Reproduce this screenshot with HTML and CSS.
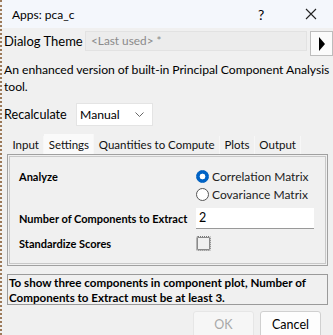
FILE: index.html
```html
<!DOCTYPE html>
<html>
<head>
<meta charset="utf-8">
<link rel="stylesheet" href="styles.css">
</head>
<body>
<div class="win">
  <div class="titlebar">
    <span class="title">Apps: pca_c</span>
    <span class="help">?</span>
    <svg class="close" width="12" height="12" viewBox="0 0 12 12"><path d="M1 1L11 11M11 1L1 11" stroke="#222" stroke-width="1.1" fill="none"/></svg>
  </div>
  <div class="theme-row">
    <span class="theme-label">Dialog Theme</span>
    <div class="theme-box">&lt;Last used&gt; *</div>
    <div class="theme-btn"><svg width="8" height="14" viewBox="0 0 8 14"><path d="M1 0L7 7L1 14Z" fill="#000"/></svg></div>
  </div>
  <div class="desc">An enhanced version of built-in Principal Component Analysis tool.</div>
  <div class="recalc-row">
    <span class="recalc-label">Recalculate</span>
    <div class="select"><span>Manual</span><svg width="9" height="6" viewBox="0 0 9 6"><path d="M0.5 0.5L4.5 4.5L8.5 0.5" stroke="#666" fill="none"/></svg></div>
  </div>
  <div class="tabs">
    <div class="tab">Input</div>
    <div class="tab active">Settings</div>
    <div class="tab">Quantities to Compute</div>
    <div class="tab">Plots</div>
    <div class="tab">Output</div>
  </div>
  <div class="panel">
    <div class="panel-inner">
      <div class="row analyze">
        <span class="lbl">Analyze</span>
        <div class="radios">
          <div class="radio-item"><span class="radio on"></span>Correlation Matrix</div>
          <div class="radio-item"><span class="radio"></span>Covariance Matrix</div>
        </div>
      </div>
      <div class="row ncomp">
        <span class="lbl">Number of Components to Extract</span>
        <div class="numbox">2</div>
      </div>
      <div class="row stdz">
        <span class="lbl">Standardize Scores</span>
        <span class="check"></span>
      </div>
    </div>
  </div>
  <div class="msg">To show three components in component plot, Number of Components to Extract must be at least 3.</div>
  <div class="buttons">
    <div class="btn disabled">OK</div>
    <div class="btn">Cancel</div>
  </div>
</div>
</body>
</html>
```
FILE: styles.css
```css
html, body {
  margin: 0;
  padding: 0;
}
body {
  width: 333px;
  height: 335px;
  overflow: hidden;
  background: #f0f0f0;
  font-family: Lato, "Liberation Sans", sans-serif;
  font-size: 12.5px;
  color: #000;
}
.win {
  height: 335px;
  border-left: 2px dotted #9c7a5a;
  box-sizing: border-box;
}
.titlebar {
  height: 28px;
  background: #f4f7fc;
  display: flex;
  align-items: center;
  padding-left: 10px;
  font-size: 12px;
}
.title {
  flex: 1;
}
.help {
  width: 12px;
  margin-right: 35px;
  font-size: 14px;
}
.close {
  margin-right: 16px;
}
.theme-row {
  display: flex;
  align-items: flex-start;
  margin-top: 3px;
  padding-left: 2px;
  height: 24px;
  white-space: nowrap;
}
.theme-label {
  font-size: 13px;
  color: #000;
  margin-top: 2px;
  width: 80px;
}
.theme-box {
  width: 215px;
  height: 18px;
  border: 1px solid #e2e2e2;
  background: #ececec;
  color: #8a8a8a;
  font-size: 11.8px;
  line-height: 18px;
  padding-left: 5px;
  box-sizing: content-box;
  margin-left: 1px;
}
.theme-btn {
  width: 21px;
  height: 23px;
  margin-left: 3px;
  border: 1px solid #bdbdbd;
  background: #fbfbfb;
  display: flex;
  align-items: center;
  justify-content: center;
}
.desc {
  padding: 6px 0 0 2px;
  font-size: 12.2px;
  line-height: 17px;
  letter-spacing: -0.05px;
}
.recalc-row {
  display: flex;
  align-items: center;
  padding-left: 2px;
  margin-top: 8px;
}
.recalc-label {
  font-size: 12.6px;
  width: 72px;
}
.select {
  width: 64px;
  height: 21px;
  background: #fff;
  border: 1px solid #e4e4e4;
  display: flex;
  align-items: center;
  justify-content: space-between;
  padding: 0 8px 0 3px;
  font-size: 12.2px;
}
.tabs {
  display: flex;
  margin-top: 8px;
  padding-left: 6px;
  height: 20px;
  align-items: flex-end;
  white-space: nowrap;
}
.tab {
  padding: 0 4.4px;
  height: 18px;
  line-height: 18px;
  font-size: 11.5px;
  background: #f0f0f0;
  border-right: 1px solid #f7f7f7;
  color: #111;
}
.tab.active {
  background: #fafafa;
  height: 20px;
  line-height: 22px;
}
.panel {
  margin: 0 5px 0 5px;
  border: 1px solid #a0a0a0;
  padding: 1px;
  background: #f0f0f0;
  height: 112px;
  box-sizing: border-box;
}
.panel-inner {
  border: 1px solid #c8c8c8;
  height: 100%;
  box-sizing: border-box;
  padding: 11px 0 0 9px;
  white-space: nowrap;
}
.row {
  display: flex;
}
.lbl {
  font-weight: bold;
  font-size: 11px;
  width: 177px;
}
.analyze {
  align-items: flex-start;
}
.analyze .lbl {
  margin-top: 2px;
}
.radios {
  display: flex;
  flex-direction: column;
  gap: 2px;
}
.radio-item {
  display: flex;
  align-items: center;
  height: 16px;
  font-size: 12px;
  color: #222;
}
.radio {
  width: 11px;
  height: 11px;
  border: 1px solid #555;
  border-radius: 50%;
  margin-right: 3px;
  box-sizing: content-box;
  background: #fff;
}
.radio.on {
  border: 1px solid #0060c0;
  background: radial-gradient(circle, #fff 0 2.6px, #0063c6 3.2px);
}
.ncomp {
  margin-top: 6px;
  align-items: center;
}
.numbox {
  width: 115px;
  height: 20px;
  background: #fff;
  border-bottom: 1px solid #999;
  padding-left: 3px;
  line-height: 20px;
  font-size: 12.5px;
}
.stdz {
  margin-top: 7px;
  align-items: center;
}
.check {
  width: 13px;
  height: 13px;
  border: 1px dotted #777;
  border-radius: 2px;
  box-shadow: inset 0 0 0 1px #8a8a8a;
}
.msg {
  margin: 8px 5px 0 5px;
  border: 1px solid #9a9a9a;
  font-weight: bold;
  font-size: 11.6px;
  line-height: 15px;
  padding: 0 1px;
  height: 31px;
  box-sizing: border-box;
}
.buttons {
  display: flex;
  justify-content: flex-end;
  gap: 6px;
  margin-top: 6px;
  padding-right: 12px;
}
.btn {
  width: 59px;
  height: 25px;
  border: 1px solid #d0d0d0;
  background: #fdfdfd;
  border-radius: 3px;
  display: flex;
  align-items: center;
  justify-content: center;
  font-size: 12.5px;
}
.btn.disabled {
  color: #a8a8a8;
  border-color: #e6e6e6;
  background: #f6f6f6;
}
```
